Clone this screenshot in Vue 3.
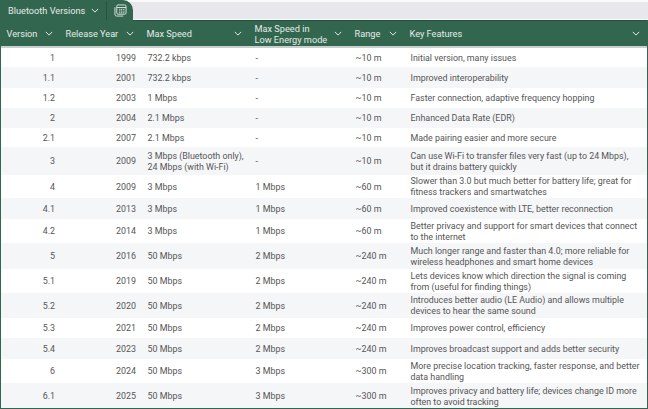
<template>
  <div class="sheet">
    <div class="tab-bar">
      <div class="tab">
        <span class="tab-name">Bluetooth Versions</span>
        <svg class="chev tab-chev" viewBox="0 0 10 6"><path d="M1 1l4 4 4-4" /></svg>
        <span class="tab-sep"></span>
        <svg class="calc" viewBox="0 0 14 14">
          <path d="M1 3.5v7.5a2 2 0 0 0 2 2h7" />
          <rect x="3" y="1" width="10" height="10" rx="1.4" />
          <path d="M3 3.8h10M5.5 5.8h1.4M7.6 5.8h1.4M9.9 5.8h1.4M5.5 7.6h1.4M7.6 7.6h1.4M9.9 7.6h1.4M5.5 9.4h1.4M7.6 9.4h1.4M9.9 9.4h1.4" />
        </svg>
      </div>
    </div>
    <div class="grid-wrap">
      <table class="grid">
        <colgroup>
          <col v-for="c in columns" :key="c.label" :style="{ width: c.width + 'px' }" />
        </colgroup>
        <thead>
          <tr>
            <th v-for="c in columns" :key="c.label">
              <div class="head-cell">
                <span class="head-label">{{ c.label }}</span>
                <svg class="chev" viewBox="0 0 10 6"><path d="M1 1l4 4 4-4" /></svg>
              </div>
            </th>
          </tr>
        </thead>
        <tbody>
          <tr v-for="(r, i) in rows" :key="r[0]" :class="{ alt: i % 2 === 1 }" :style="{ height: r[6] + 'px' }">
            <td class="num">{{ r[0] }}</td>
            <td class="num">{{ r[1] }}</td>
            <td>{{ r[2] }}</td>
            <td>{{ r[3] }}</td>
            <td>{{ r[4] }}</td>
            <td>{{ r[5] }}</td>
          </tr>
        </tbody>
      </table>
    </div>
  </div>
</template>

<script setup>
const columns = [
  { label: 'Version', width: 59 },
  { label: 'Release Year', width: 81 },
  { label: 'Max Speed', width: 108 },
  { label: 'Max Speed in Low Energy mode', width: 100 },
  { label: 'Range', width: 55 },
  { label: 'Key Features', width: 243 }
]

// version, year, speed, LE speed, range, features, row height
const rows = [
  ['1', '1999', '732.2 kbps', '-', '~10 m', 'Initial version, many issues', 19],
  ['1.1', '2001', '732.2 kbps', '-', '~10 m', 'Improved interoperability', 21],
  ['1.2', '2003', '1 Mbps', '-', '~10 m', 'Faster connection, adaptive frequency hopping', 20],
  ['2', '2004', '2.1 Mbps', '-', '~10 m', 'Enhanced Data Rate (EDR)', 20],
  ['2.1', '2007', '2.1 Mbps', '-', '~10 m', 'Made pairing easier and more secure', 19],
  ['3', '2009', '3 Mbps (Bluetooth only), 24 Mbps (with Wi-Fi)', '-', '~10 m', 'Can use Wi-Fi to transfer files very fast (up to 24 Mbps), but it drains battery quickly', 28],
  ['4', '2009', '3 Mbps', '1 Mbps', '~60 m', 'Slower than 3.0 but much better for battery life; great for fitness trackers and smartwatches', 23],
  ['4.1', '2013', '3 Mbps', '1 Mbps', '~60 m', 'Improved coexistence with LTE, better reconnection', 21],
  ['4.2', '2014', '3 Mbps', '1 Mbps', '~60 m', 'Better privacy and support for smart devices that connect to the internet', 24],
  ['5', '2016', '50 Mbps', '2 Mbps', '~240 m', 'Much longer range and faster than 4.0; more reliable for wireless headphones and smart home devices', 26],
  ['5.1', '2019', '50 Mbps', '2 Mbps', '~240 m', 'Lets devices know which direction the signal is coming from (useful for finding things)', 24],
  ['5.2', '2020', '50 Mbps', '2 Mbps', '~240 m', 'Introduces better audio (LE Audio) and allows multiple devices to hear the same sound', 25],
  ['5.3', '2021', '50 Mbps', '2 Mbps', '~240 m', 'Improves power control, efficiency', 20],
  ['5.4', '2023', '50 Mbps', '2 Mbps', '~240 m', 'Improves broadcast support and adds better security', 21],
  ['6', '2024', '50 Mbps', '3 Mbps', '~300 m', 'More precise location tracking, faster response, and better data handling', 24],
  ['6.1', '2025', '50 Mbps', '3 Mbps', '~300 m', 'Improves privacy and battery life; devices change ID more often to avoid tracking', 25]
]
</script>

<style>
body {
  margin: 0;
  background: #ffffff;
}
</style>

<style scoped>
.sheet {
  width: 648px;
  height: 409px;
  overflow: hidden;
  font-family: Roboto, "Liberation Sans", sans-serif;
  background: #ffffff;
}

.tab-bar {
  height: 20px;
  box-sizing: border-box;
  background: #e8e8ec;
  border-top: 2px solid #fafafa;
  border-bottom: 1px solid #fafafa;
  position: relative;
}

/* sticks up over the bar's light edges */
.tab {
  position: absolute;
  left: 0;
  top: -2px;
  width: 133px;
  height: 21px;
  display: flex;
  align-items: center;
  box-sizing: border-box;
  padding-left: 8px;
  background: #33664f;
  border-radius: 0 10px 0 0;
  color: #e4ece8;
  font-size: 9.2px;
}

.tab-name {
  width: 78px;
  white-space: nowrap;
}

.tab-chev {
  margin-left: 5px;
}

.tab-sep {
  width: 1px;
  height: 19px;
  margin-left: 7px;
  background: #28523f;
}

.calc {
  width: 13px;
  height: 13px;
  margin-left: 7px;
  fill: none;
  stroke: #dfe8e4;
  stroke-width: 1;
}

.chev {
  width: 8px;
  height: 5px;
  flex: none;
  fill: none;
  stroke: #e8efec;
  stroke-width: 1.2;
}

.grid-wrap {
  height: 389px;
  box-sizing: border-box;
  border: 1px solid #33664f;
  border-width: 0 1px 1px;
}

.grid {
  width: 646px;
  table-layout: fixed;
  border-collapse: separate;
  border-spacing: 0;
  font-size: 8.9px;
  color: #555555;
}

.grid thead tr {
  height: 28px;
}

.grid th {
  padding: 0 7px 0 5.5px;
  background: #33664f;
  border-top: 1px solid #28523f;
  border-bottom: 2px solid #c9cfcc;
  font-weight: 400;
  font-size: 9.2px;
  text-align: left;
  color: #e4ece8;
  line-height: 11px;
}

.head-cell {
  display: flex;
  align-items: center;
  justify-content: space-between;
  gap: 6px;
}

.grid td {
  padding: 1px 4px 0 6.5px;
  line-height: 11px;
}

.grid tbody tr:last-child td {
  padding-top: 2px;
}

.grid td.num {
  padding-right: 5px;
  text-align: right;
}

.alt td {
  background: #f5f6f8;
}
</style>
